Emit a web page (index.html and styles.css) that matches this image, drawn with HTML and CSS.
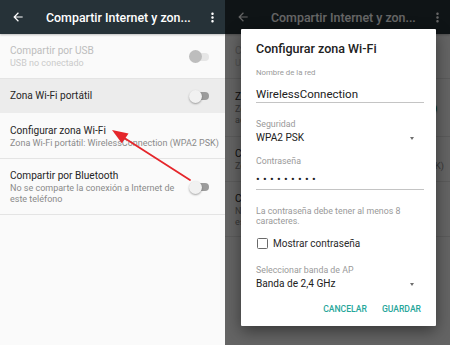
FILE: index.html
```html
<!DOCTYPE html>
<html lang="es">
<head>
<meta charset="utf-8">
<title>Compartir Internet y zona Wi-Fi</title>
<link rel="stylesheet" href="styles.css">
</head>
<body>
<div class="screens">
  <section class="phone">
    <header class="toolbar">
      <svg class="back" viewBox="0 0 24 24"><path d="M20 11H7.83l5.59-5.59L12 4l-8 8 8 8 1.41-1.41L7.83 13H20v-2z"/></svg>
      <div class="tb-title">Compartir Internet y zon...</div>
      <svg class="more" viewBox="0 0 24 24"><path d="M12 8c1.1 0 2-.9 2-2s-.9-2-2-2-2 .9-2 2 .9 2 2 2zm0 2c-1.1 0-2 .9-2 2s.9 2 2 2 2-.9 2-2-.9-2-2-2zm0 6c-1.1 0-2 .9-2 2s.9 2 2 2 2-.9 2-2-.9-2-2-2z"/></svg>
    </header>
    <ul class="prefs">
      <li class="pref disabled r1">
        <div class="txt"><div class="p-title">Compartir por USB</div><div class="p-sub">USB no conectado</div></div>
        <span class="switch"></span>
      </li>
      <li class="pref hl r2 nodiv">
        <div class="txt"><div class="p-title">Zona Wi-Fi portátil</div></div>
        <span class="switch"></span>
      </li>
      <li class="pref r3">
        <div class="txt"><div class="p-title">Configurar zona Wi-Fi</div><div class="p-sub one">Zona Wi-Fi portátil: WirelessConnection (WPA2 PSK)</div></div>
      </li>
      <li class="pref r4">
        <div class="txt"><div class="p-title">Compartir por Bluetooth</div><div class="p-sub">No se comparte la conexión a Internet de este teléfono</div></div>
        <span class="switch"></span>
      </li>
    </ul>
    <svg class="annot" viewBox="0 0 225 345" width="225" height="345">
      <line x1="190" y1="180" x2="122" y2="136.5" stroke="#e5262b" stroke-width="1.8" stroke-linecap="round"/>
      <polygon points="112,130 128.5,133.6 121.8,143.2" fill="#e5262b"/>
    </svg>
  </section>

  <section class="phone">
    <header class="toolbar">
      <svg class="back" viewBox="0 0 24 24"><path d="M20 11H7.83l5.59-5.59L12 4l-8 8 8 8 1.41-1.41L7.83 13H20v-2z"/></svg>
      <div class="tb-title">Compartir Internet y zon...</div>
      <svg class="more" viewBox="0 0 24 24"><path d="M12 8c1.1 0 2-.9 2-2s-.9-2-2-2-2 .9-2 2 .9 2 2 2zm0 2c-1.1 0-2 .9-2 2s.9 2 2 2 2-.9 2-2-.9-2-2-2zm0 6c-1.1 0-2 .9-2 2s.9 2 2 2 2-.9 2-2-.9-2-2-2z"/></svg>
    </header>
    <ul class="prefs">
      <li class="pref disabled b1">
        <div class="txt"><div class="p-title">Compartir por USB</div><div class="p-sub">USB no conectado</div></div>
        <span class="switch"></span>
      </li>
      <li class="pref b2">
        <div class="txt"><div class="p-title">Zona Wi-Fi portátil</div><div class="p-sub">Zona Wi-Fi portátil WirelessConnection activa</div></div>
        <span class="switch on"></span>
      </li>
      <li class="pref b3">
        <div class="txt"><div class="p-title">Configurar zona Wi-Fi</div><div class="p-sub one">Zona Wi-Fi portátil: WirelessConnection (WPA2 PSK)</div></div>
      </li>
      <li class="pref b4">
        <div class="txt"><div class="p-title">Compartir por Bluetooth</div><div class="p-sub">No se comparte la conexión a Internet de este teléfono</div></div>
        <span class="switch"></span>
      </li>
    </ul>
    <div class="scrim"></div>
    <div class="dialog">
      <div class="dlg-title">Configurar zona Wi-Fi</div>
      <div class="label l-name">Nombre de la red</div>
      <div class="field f-name">WirelessConnection</div>
      <div class="label l-sec">Seguridad</div>
      <div class="spinner"><span>WPA2 PSK</span><i class="caret"></i></div>
      <div class="label l-pass">Contraseña</div>
      <div class="field f-pass">•••••••••</div>
      <div class="helper">La contraseña debe tener al menos 8 caracteres.</div>
      <label class="check"><span class="box"></span><span>Mostrar contraseña</span></label>
      <div class="label l-band">Seleccionar banda de AP</div>
      <div class="spinner"><span>Banda de 2,4 GHz</span><i class="caret"></i></div>
      <div class="actions"><span class="btn">CANCELAR</span><span class="btn">GUARDAR</span></div>
    </div>
  </section>
</div>
</body>
</html>
```
FILE: styles.css
```css
* { box-sizing: border-box; margin: 0; padding: 0; }
html, body { width: 450px; height: 345px; overflow: hidden; }
body { font-family: Roboto, "Noto Sans", sans-serif; background: #fafafa; color: #212121; }

.screens { display: flex; height: 345px; }
.phone { position: relative; width: 225px; flex: none; height: 345px; background: #fafafa; overflow: hidden; }

.toolbar { position: relative; z-index: 1; height: 34px; background: #263238; display: flex; align-items: center; color: #fff; box-shadow: 0 1px 2px rgba(0,0,0,.25); }
.toolbar .back { width: 14px; height: 14px; margin-left: 10.5px; fill: #fff; flex: none; }
.toolbar .tb-title { margin-left: 21.5px; flex: 1; font-size: 12.4px; font-weight: 500; white-space: nowrap; overflow: hidden; }
.toolbar .more { width: 15px; height: 15px; margin-right: 5.5px; fill: #fff; flex: none; }

.prefs { list-style: none; }
.pref { display: flex; align-items: center; padding: 10px 16px 9px 10px; border-bottom: 1px solid #e4e4e4; }
.pref.nodiv { border-bottom: none; padding-bottom: 10px; }
.pref.hl { background: #ececec; }
.pref.r3 { padding-top: 11px; }
.pref.b2 { padding-top: 11px; padding-bottom: 10px; }
.pref.b4 { padding-bottom: 8px; }
.txt { flex: 1; min-width: 0; }
.p-title { font-size: 10.1px; line-height: 14px; color: #262626; }
.p-sub { font-size: 9px; line-height: 11px; color: #8a8a8a; }
.p-sub.one { white-space: nowrap; }
.disabled .p-title { color: #bdbdbd; }
.disabled .p-sub { color: #cacaca; }

.switch { position: relative; flex: none; width: 20px; height: 13px; margin-left: 12px; }
.switch::before { content: ""; position: absolute; left: 1px; top: 2.5px; width: 19px; height: 8px; border-radius: 4px; background: #9c9c9c; }
.switch::after { content: ""; position: absolute; left: 0; top: 0; width: 13px; height: 13px; border-radius: 50%; background: #f1f1f1; box-shadow: 0 1px 2px rgba(0,0,0,.35); }
.disabled .switch::before { background: #e6e6e6; }
.disabled .switch::after { background: #bdbdbd; box-shadow: none; }
.switch.on::before { background: #80cbc4; }
.switch.on::after { left: 10px; background: #009688; }

.annot { position: absolute; left: 0; top: 0; pointer-events: none; }

.scrim { position: absolute; inset: 0; z-index: 2; background: rgba(0,0,0,.6); }

.dialog { position: absolute; z-index: 3; left: 16px; top: 29px; width: 195px; height: 297px; background: #fff; padding: 12px 12px 10px 15px; box-shadow: 0 5px 16px rgba(0,0,0,.45); border-radius: 1px; }
.dlg-title { font-size: 12.5px; font-weight: 500; line-height: 16px; color: #212121; }
.label { font-size: 8.8px; line-height: 10px; color: #9a9a9a; }
.l-name { margin-top: 11px; font-size: 7.8px; }
.l-sec { margin-top: 16px; }
.l-pass { margin-top: 11px; }
.l-band { margin-top: 15px; }
.field { font-size: 11.5px; line-height: 14px; color: #212121; border-bottom: 1px solid #c4c4c4; }
.f-name { margin-top: 8.5px; padding-bottom: 1.5px; }
.f-pass { margin-top: 7px; padding-bottom: 2px; letter-spacing: 3.3px; font-size: 11px; }
.spinner { margin-top: 2px; display: flex; align-items: center; justify-content: space-between; font-size: 10.1px; line-height: 14px; color: #212121; }
.caret { display: block; width: 0; height: 0; border-left: 2.8px solid transparent; border-right: 2.8px solid transparent; border-top: 3px solid #6e6e6e; margin-right: 10.5px; }
.helper { margin-top: 17px; font-size: 8.8px; line-height: 9.5px; color: #999; }
.check { margin-top: 10px; display: flex; align-items: center; height: 14px; font-size: 10px; color: #2a2a2a; }
.check .box { width: 11px; height: 11px; border: 1.5px solid #6a6a6a; border-radius: 1.5px; margin-left: 1px; margin-right: 5px; }
.actions { margin-top: 11px; margin-right: 3px; display: flex; justify-content: flex-end; gap: 15px; line-height: 14px; }
.btn { font-size: 8.6px; font-weight: 500; color: #26a69a; }
```
